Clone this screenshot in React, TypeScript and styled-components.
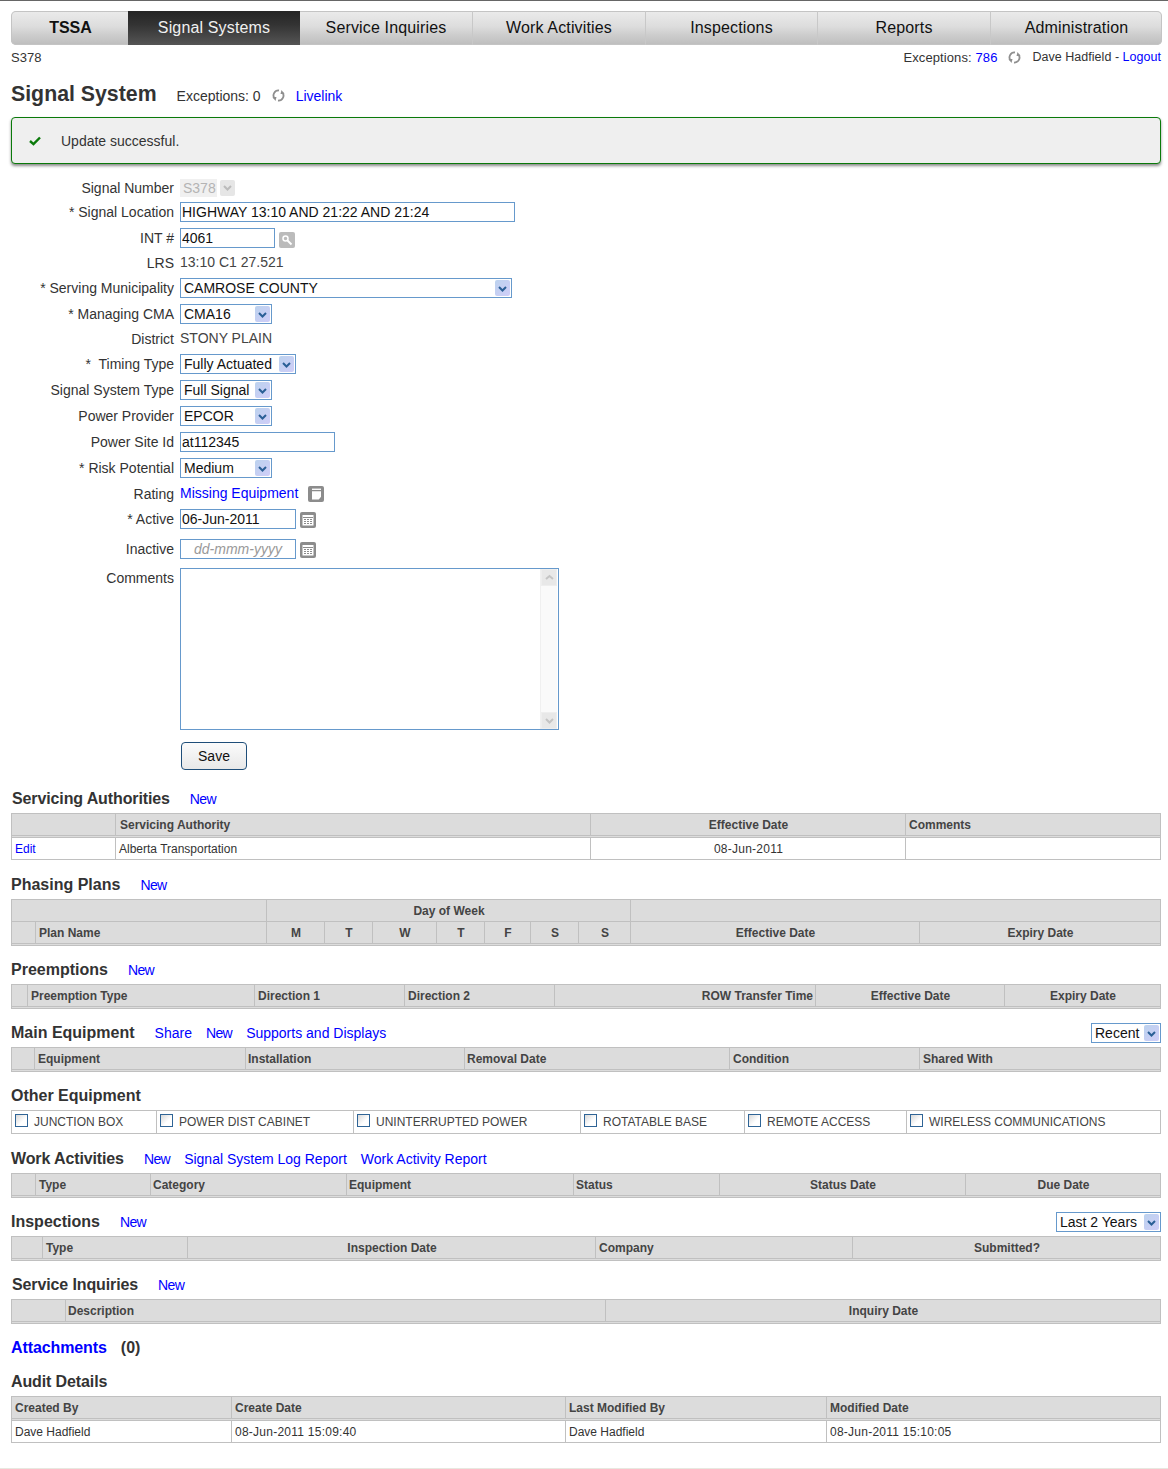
import React, { FC, PropsWithChildren } from 'react';
import styled, { createGlobalStyle } from 'styled-components';

const GlobalStyle = createGlobalStyle`
  html, body { margin: 0; padding: 0; background: #ffffff; }
  body { font-family: "Liberation Sans", Arial, sans-serif; font-size: 14px; color: #333333; }
  a { color: #0000ff; text-decoration: none; }
`;

const Page = styled('div')`
  box-sizing: border-box;
  width: 1168px;
  height: 1469px;
  padding: 11px 6px 0 11px;
  border-top: 1px solid #666666;
  border-bottom: 1px solid #e8e8e0;
  overflow: hidden;
`;

/* ---- nav ---- */
const NavBar = styled('nav')`
  display: flex;
  width: 1151px;
  height: 34px;
  margin-top: -1px;
  border-radius: 5px;
  overflow: hidden;
  box-shadow: inset 0 0 0 1px #c4c4c4;
  background: linear-gradient(#ebebeb 0, #dddddd 45%, #cccccc 72%, #bdbdbd 100%);
`;

const NavItem = styled('a')<{ $w: number; $active?: boolean; $brand?: boolean }>`
  box-sizing: border-box;
  display: flex;
  align-items: center;
  justify-content: center;
  width: ${(p) => p.$w}px;
  height: 34px;
  padding: 0 0 1px ${(p) => (p.$brand ? 2 : 0)}px;
  font-size: 16px;
  letter-spacing: ${(p) => (p.$brand ? 0 : 0.15)}px;
  font-weight: ${(p) => (p.$brand ? 700 : 400)};
  color: ${(p) => (p.$active ? '#f0f0f0' : '#111111')};
  background: ${(p) => (p.$active ? 'linear-gradient(#252525 0, #333333 40%, #555555 100%)' : 'transparent')};
  border-right: ${(p) => (p.$brand || p.$active ? '0' : '1px solid #c8c8c8')};
  &:last-child { border-right: 0; }
`;

const TopInfo = styled('div')`
  display: flex;
  justify-content: space-between;
  align-items: center;
  height: 24px;
  font-size: 13px;
`;

const UserInfo = styled('div')`
  display: flex;
  align-items: center;
  gap: 11px;
  padding-right: 1px;
`;

const ExceptionCount = styled('span')`
  letter-spacing: 0.1px;
`;

const UserName = styled('span')`
  font-size: 12.5px;
  letter-spacing: 0.03px;
`;

const TitleRow = styled('div')`
  display: flex;
  align-items: center;
  height: 32px;
  margin-top: 9px;
`;

const Title = styled('h1')`
  margin: 0 20px 0 0;
  font-size: 21.3px;
  font-weight: 700;
  color: #333333;
`;

const TitleMeta = styled('div')`
  display: flex;
  align-items: center;
  gap: 11px;
  padding-top: 3px;
`;

const Alert = styled('div')`
  box-sizing: border-box;
  display: flex;
  align-items: center;
  gap: 20px;
  width: 1150px;
  height: 47px;
  margin-top: 7px;
  padding-left: 17px;
  background: #efefef;
  border: 1px solid #0a7a0a;
  border-radius: 4px;
  box-shadow: 0 2px 3px rgba(0, 0, 0, 0.45);
`;

/* ---- form ---- */
const Form = styled('form')`
  margin: 12px 0 0 0;
`;

const FormRow = styled('div')<{ $h: number; $top?: boolean }>`
  display: flex;
  align-items: ${(p) => (p.$top ? 'flex-start' : 'center')};
  height: ${(p) => p.$h}px;
  margin-top: ${(p) => (p.$top ? 2 : 0)}px;
`;

const Label = styled('label')<{ $top?: boolean }>`
  width: 163px;
  margin-right: 6px;
  padding-top: ${(p) => (p.$top ? 2 : 0)}px;
  text-align: right;
  white-space: nowrap;
  color: #333333;
`;

const Value = styled('span')`
  color: #444444;
  margin-top: -2px;
`;

const RatingLink = styled('a')`
  margin-top: -2px;
`;

const TextInput = styled('input')<{ $w: number; $hint?: boolean }>`
  box-sizing: border-box;
  width: ${(p) => p.$w}px;
  height: 20px;
  padding: 0 1px;
  border: 1px solid #6699cc;
  font-family: inherit;
  font-size: 14px;
  color: #111111;
  outline: 0;
  text-align: ${(p) => (p.$hint ? 'center' : 'left')};
  &::placeholder { color: #999999; font-style: italic; opacity: 1; }
`;

const SelectShell = styled('span')<{ $w: number; $disabled?: boolean }>`
  box-sizing: border-box;
  display: inline-flex;
  align-items: center;
  gap: ${(p) => (p.$disabled ? 3 : 0)}px;
  width: ${(p) => p.$w}px;
  height: 20px;
  padding-right: 1px;
  border: ${(p) => (p.$disabled ? '0' : '1px solid #6699cc')};
  background: ${(p) => (p.$disabled ? 'transparent' : '#ffffff')};
`;

const SelectField = styled('select')<{ $disabled?: boolean }>`
  flex: 1;
  min-width: 0;
  height: 18px;
  padding: 0 0 0 3px;
  border: 0;
  background: ${(p) => (p.$disabled ? '#f0f0f0' : 'transparent')};
  appearance: none;
  font-family: inherit;
  font-size: 14px;
  color: ${(p) => (p.$disabled ? '#b4b4b4' : '#111111')};
  outline: 0;
  opacity: 1;
`;

const ArrowButton = styled('span')<{ $disabled?: boolean }>`
  display: flex;
  align-items: center;
  justify-content: center;
  flex: none;
  width: 15px;
  height: 16px;
  border-radius: 2px;
  background: ${(p) => (p.$disabled ? '#e6e6e6' : 'linear-gradient(135deg, #bcd2ee, #cfcdf8)')};
`;

const IconSquare = styled('span')<{ $gap: number; $drop?: number; $light?: boolean }>`
  display: inline-flex;
  align-items: center;
  justify-content: center;
  width: 16px;
  height: 16px;
  margin-left: ${(p) => p.$gap}px;
  margin-top: ${(p) => (p.$drop ?? 0) * 2}px;
  border-radius: 2px;
  background: ${(p) => (p.$light ? '#bbbbbb' : '#8c8c8c')};
`;

const CommentsBox = styled('div')`
  box-sizing: border-box;
  display: flex;
  width: 379px;
  height: 162px;
  border: 1px solid #6699cc;
`;

const CommentsText = styled('textarea')`
  flex: 1;
  border: 0;
  padding: 2px;
  resize: none;
  outline: 0;
`;

const ScrollTrack = styled('div')`
  display: flex;
  flex-direction: column;
  justify-content: space-between;
  width: 16px;
  margin-right: 1px;
  background: #fafafa;
  border-left: 1px solid #f0f0f0;
`;

const ScrollButton = styled('span')`
  display: flex;
  align-items: center;
  justify-content: center;
  height: 15px;
  background: #e8e8e8;
  border: 1px solid #eeeeee;
`;

const SaveRow = styled('div')`
  margin: 12px 0 0 170px;
  height: 28px;
`;

const SaveButton = styled('button')`
  box-sizing: border-box;
  width: 66px;
  height: 28px;
  border: 1px solid #1f4e79;
  border-radius: 4px;
  background: linear-gradient(#fbfbfb, #e8e8e8);
  font-family: inherit;
  font-size: 14px;
  color: #111111;
`;

/* ---- sections ---- */
const SectionHead = styled('div')<{ $top: number; $inset?: boolean }>`
  display: flex;
  align-items: center;
  height: 28px;
  margin-top: ${(p) => p.$top}px;
  padding-left: ${(p) => (p.$inset ? 1 : 0)}px;
  width: 1150px;
`;

const SectionTitle = styled('h2')<{ $tight?: boolean }>`
  margin: 0 20px 0 0;
  font-size: 16px;
  font-weight: 700;
  letter-spacing: ${(p) => (p.$tight ? -0.12 : 0)}px;
  color: #333333;
`;

const SectionLinks = styled('div')`
  display: flex;
  gap: 14px;
`;

const NewLink = styled('a')`
  letter-spacing: -0.6px;
`;

const RightSelect = styled('div')`
  margin-left: auto;
  display: flex;
`;

const AttachLink = styled('a')`
  font-size: 16px;
  font-weight: 700;
  letter-spacing: -0.1px;
`;

const AttachCount = styled('span')`
  margin-left: 14px;
  font-size: 16px;
  font-weight: 700;
`;

const Table = styled('div')`
  box-sizing: border-box;
  width: 1150px;
  border: 1px solid #c0c0c0;
  border-bottom: 0;
  font-size: 12px;
`;

const Row = styled('div')<{ $cols: string; $variant: 'head' | 'plain' | 'last'; $h?: number }>`
  display: grid;
  grid-template-columns: ${(p) => p.$cols};
  height: ${(p) => p.$h ?? 21}px;
  background: ${(p) => (p.$variant === 'plain' ? '#ffffff' : '#dcdcdc')};
  border-bottom: ${(p) => (p.$variant === 'head' ? '3px double #c0c0c0' : '1px solid #c0c0c0')};
`;

const Cell = styled('div')<{ $align?: string; $head?: boolean; $pad?: number; $date?: boolean }>`
  box-sizing: border-box;
  display: flex;
  align-items: center;
  justify-content: ${(p) => p.$align ?? 'flex-start'};
  padding: 0 2px 0 ${(p) => p.$pad ?? 3}px;
  font-weight: ${(p) => (p.$head ? 700 : 400)};
  letter-spacing: ${(p) => (p.$date ? 0.25 : 0)}px;
  color: ${(p) => (p.$head ? '#444444' : '#333333')};
  border-left: 1px solid #c0c0c0;
  white-space: nowrap;
  &:first-child { border-left: 0; }
`;

const CheckBox = styled('input')`
  appearance: none;
  flex: none;
  box-sizing: border-box;
  width: 13px;
  height: 13px;
  margin: -3px 6px 0 0;
  border: 1px solid #2f6496;
  background: linear-gradient(135deg, #d8d8d8, #ffffff 60%);
`;

const CheckText = styled('span')`
  color: #444444;
`;

const Chevron: FC<{ color?: string; up?: boolean }> = ({ color = '#2a5f96', up }) => (
  <svg width="9" height="7" viewBox="0 0 9 7">
    <path d={up ? 'M1 5 L4.5 2 L8 5' : 'M1 2 L4.5 5.5 L8 2'} fill="none" stroke={color} strokeWidth="2" />
  </svg>
);

const RefreshIcon: FC = () => (
  <svg width="13" height="13" viewBox="0 0 13 13">
    <path d="M7 1.5 A5 5 0 0 0 2.7 9.7" fill="none" stroke="#8f8f8f" strokeWidth="1.8" />
    <path d="M6 11.5 A5 5 0 0 0 10.3 3.3" fill="none" stroke="#8f8f8f" strokeWidth="1.8" />
    <path d="M0.5 8 L4.5 8 L3.5 12 Z M12.5 5 L8.5 5 L9.5 1 Z" fill="#8f8f8f" />
  </svg>
);

const CheckIcon: FC = () => (
  <svg width="12" height="10" viewBox="0 0 12 10">
    <path d="M1 5 L4.5 8.2 L11 1.5" fill="none" stroke="#0a7a0a" strokeWidth="2.4" />
  </svg>
);

const SearchIcon: FC = () => (
  <svg width="12" height="12" viewBox="0 0 12 12">
    <circle cx="4.5" cy="4.5" r="2.5" fill="none" stroke="#ffffff" strokeWidth="1.5" />
    <path d="M6.5 6.5 L10.5 10.5" stroke="#ffffff" strokeWidth="2" />
  </svg>
);

const RatingIcon: FC = () => (
  <svg width="9" height="12" viewBox="0 0 10 12">
    <path d="M0 0 H10 V1.5 H0 Z" fill="#ffffff" />
    <path d="M0 3 H10 V9 L7.5 12 H0 Z" fill="#ffffff" />
  </svg>
);

const CalendarIcon: FC = () => (
  <svg width="12" height="12" viewBox="0 0 12 12">
    <rect x="0.5" y="1" width="11" height="10.5" fill="#ffffff" />
    <path d="M1 3.5 H11" stroke="#8c8c8c" />
    <path d="M2 5.5 H4 M5 5.5 H7 M8 5.5 H10 M2 7.5 H4 M5 7.5 H7 M8 7.5 H10 M2 9.5 H4 M5 9.5 H7 M8 9.5 H10" stroke="#8c8c8c" />
  </svg>
);

// column widths from the x of each vertical rule
const tracks = (edges: number[]): string => {
  const all = [12, ...edges, 1160];

  return all.slice(1).map((x, i) => `${x - all[i]}px`).join(' ');
};

type ColumnDef = { text?: string; align?: string; pad?: number };

const HeadRow: FC<{ edges: number[]; columns: ColumnDef[]; last?: boolean }> = ({ edges, columns, last }) => (
  <Row $cols={tracks(edges)} $variant={last ? 'last' : 'head'}>
    {columns.map((col, i) => (
      <Cell key={`head-${i}`} $head $align={col.align} $pad={col.pad}>{col.text}</Cell>
    ))}
  </Row>
);

const Select: FC<{ w: number; value: string; disabled?: boolean }> = ({ w, value, disabled }) => (
  <SelectShell $w={w} $disabled={disabled}>
    <SelectField $disabled={disabled} disabled={disabled} defaultValue={value}>
      <option>{value}</option>
    </SelectField>
    <ArrowButton $disabled={disabled}>
      <Chevron color={disabled ? '#bbbbbb' : '#2a5f96'} />
    </ArrowButton>
  </SelectShell>
);

const Field: FC<PropsWithChildren<{ h: number; label: string; top?: boolean }>> = ({ h, label, top, children }) => (
  <FormRow $h={h} $top={top}>
    <Label $top={top}>{label}</Label>
    {children}
  </FormRow>
);

const center = 'center';

const otherEquipment = [
  'JUNCTION BOX',
  'POWER DIST CABINET',
  'UNINTERRUPTED POWER',
  'ROTATABLE BASE',
  'REMOTE ACCESS',
  'WIRELESS COMMUNICATIONS',
];

const App: FC = () => {
  return (
    <Page>
      <GlobalStyle />
      <NavBar>
        <NavItem $w={117} $brand>TSSA</NavItem>
        <NavItem $w={172} $active>Signal Systems</NavItem>
        <NavItem $w={173}>Service Inquiries</NavItem>
        <NavItem $w={173}>Work Activities</NavItem>
        <NavItem $w={172}>Inspections</NavItem>
        <NavItem $w={173}>Reports</NavItem>
        <NavItem $w={171}>Administration</NavItem>
      </NavBar>
      <TopInfo>
        <span>S378</span>
        <UserInfo>
          <ExceptionCount>Exceptions: <a href="#x">786</a></ExceptionCount>
          <RefreshIcon />
          <UserName>Dave Hadfield - <a href="#l">Logout</a></UserName>
        </UserInfo>
      </TopInfo>

      <TitleRow>
        <Title>Signal System</Title>
        <TitleMeta>
          <span>Exceptions: 0</span>
          <RefreshIcon />
          <a href="#l">Livelink</a>
        </TitleMeta>
      </TitleRow>

      <Alert>
        <CheckIcon />
        <span>Update successful.</span>
      </Alert>

      <Form>
        <Field h={23} label="Signal Number"><Select w={56} value="S378" disabled /></Field>
        <Field h={26} label="* Signal Location"><TextInput $w={335} defaultValue="HIGHWAY 13:10 AND 21:22 AND 21:24" /></Field>
        <Field h={26} label="INT #">
          <TextInput $w={95} defaultValue="4061" />
          <IconSquare $gap={4} $drop={2} $light><SearchIcon /></IconSquare>
        </Field>
        <Field h={24} label="LRS"><Value>13:10 C1 27.521</Value></Field>
        <Field h={26} label="* Serving Municipality"><Select w={332} value="CAMROSE COUNTY" /></Field>
        <Field h={26} label="* Managing CMA"><Select w={92} value="CMA16" /></Field>
        <Field h={24} label="District"><Value>STONY PLAIN</Value></Field>
        <Field h={26} label={'*\u00a0 Timing Type'}><Select w={116} value="Fully Actuated" /></Field>
        <Field h={26} label="Signal System Type"><Select w={92} value="Full Signal" /></Field>
        <Field h={26} label="Power Provider"><Select w={92} value="EPCOR" /></Field>
        <Field h={26} label="Power Site Id"><TextInput $w={155} defaultValue="at112345" /></Field>
        <Field h={26} label="* Risk Potential"><Select w={92} value="Medium" /></Field>
        <Field h={25} label="Rating">
          <RatingLink href="#m">Missing Equipment</RatingLink>
          <IconSquare $gap={10}><RatingIcon /></IconSquare>
        </Field>
        <Field h={26} label="* Active">
          <TextInput $w={116} defaultValue="06-Jun-2011" />
          <IconSquare $gap={4} $drop={1}><CalendarIcon /></IconSquare>
        </Field>
        <Field h={34} label="Inactive">
          <TextInput $w={116} $hint placeholder="dd-mmm-yyyy" />
          <IconSquare $gap={4} $drop={1}><CalendarIcon /></IconSquare>
        </Field>
        <Field h={162} label="Comments" top>
          <CommentsBox>
            <CommentsText />
            <ScrollTrack>
              <ScrollButton><Chevron color="#c4c4c4" up /></ScrollButton>
              <ScrollButton><Chevron color="#c4c4c4" /></ScrollButton>
            </ScrollTrack>
          </CommentsBox>
        </Field>
        <SaveRow>
          <SaveButton type="button">Save</SaveButton>
        </SaveRow>
      </Form>

      <SectionHead $top={15} $inset>
        <SectionTitle $tight>Servicing Authorities</SectionTitle>
        <SectionLinks><NewLink href="#n">New</NewLink></SectionLinks>
      </SectionHead>
      <Table>
        <HeadRow
          edges={[115, 590, 905]}
          columns={[{}, { text: 'Servicing Authority', pad: 4 }, { text: 'Effective Date', align: center }, { text: 'Comments', pad: 3 }]}
        />
        <Row $cols={tracks([115, 590, 905])} $variant="plain">
          <Cell><a href="#e">Edit</a></Cell>
          <Cell>Alberta Transportation</Cell>
          <Cell $align={center} $date>08-Jun-2011</Cell>
          <Cell />
        </Row>
      </Table>

      <SectionHead $top={11}>
        <SectionTitle>Phasing Plans</SectionTitle>
        <SectionLinks><NewLink href="#n">New</NewLink></SectionLinks>
      </SectionHead>
      <Table>
        <HeadRow
          last
          edges={[266, 630]}
          columns={[{}, { text: 'Day of Week', align: center }, {}]}
        />
        <HeadRow
          edges={[35, 266, 324, 372, 436, 484, 530, 578, 630, 919]}
          columns={[
            {},
            { text: 'Plan Name' },
            { text: 'M', align: center },
            { text: 'T', align: center },
            { text: 'W', align: center },
            { text: 'T', align: center },
            { text: 'F', align: center },
            { text: 'S', align: center },
            { text: 'S', align: center },
            { text: 'Effective Date', align: center },
            { text: 'Expiry Date', align: center },
          ]}
        />
      </Table>

      <SectionHead $top={10}>
        <SectionTitle>Preemptions</SectionTitle>
        <SectionLinks><NewLink href="#n">New</NewLink></SectionLinks>
      </SectionHead>
      <Table>
        <HeadRow
          edges={[27, 254, 404, 554, 815, 1004]}
          columns={[
            {},
            { text: 'Preemption Type' },
            { text: 'Direction 1' },
            { text: 'Direction 2' },
            { text: 'ROW Transfer Time', align: 'flex-end' },
            { text: 'Effective Date', align: center },
            { text: 'Expiry Date', align: center },
          ]}
        />
      </Table>

      <SectionHead $top={10}>
        <SectionTitle>Main Equipment</SectionTitle>
        <SectionLinks>
          <a href="#s">Share</a>
          <NewLink href="#n">New</NewLink>
          <a href="#d">Supports and Displays</a>
        </SectionLinks>
        <RightSelect><Select w={70} value="Recent" /></RightSelect>
      </SectionHead>
      <Table>
        <HeadRow
          edges={[34, 245, 464, 729, 919]}
          columns={[
            {},
            { text: 'Equipment' },
            { text: 'Installation', pad: 2 },
            { text: 'Removal Date', pad: 2 },
            { text: 'Condition' },
            { text: 'Shared With' },
          ]}
        />
      </Table>

      <SectionHead $top={10}>
        <SectionTitle>Other Equipment</SectionTitle>
      </SectionHead>
      <Table>
        <Row $cols={tracks([156, 353, 580, 744, 906])} $variant="plain" $h={22}>
          {otherEquipment.map((name) => (
            <Cell key={name}>
              <CheckBox type="checkbox" />
              <CheckText>{name}</CheckText>
            </Cell>
          ))}
        </Row>
      </Table>

      <SectionHead $top={11}>
        <SectionTitle $tight>Work Activities</SectionTitle>
        <SectionLinks>
          <NewLink href="#n">New</NewLink>
          <a href="#l">Signal System Log Report</a>
          <a href="#r">Work Activity Report</a>
        </SectionLinks>
      </SectionHead>
      <Table>
        <HeadRow
          edges={[35, 150, 346, 573, 719, 965]}
          columns={[
            {},
            { text: 'Type' },
            { text: 'Category', pad: 2 },
            { text: 'Equipment', pad: 2 },
            { text: 'Status', pad: 2 },
            { text: 'Status Date', align: center },
            { text: 'Due Date', align: center },
          ]}
        />
      </Table>

      <SectionHead $top={10}>
        <SectionTitle>Inspections</SectionTitle>
        <SectionLinks><NewLink href="#n">New</NewLink></SectionLinks>
        <RightSelect><Select w={105} value="Last 2 Years" /></RightSelect>
      </SectionHead>
      <Table>
        <HeadRow
          edges={[42, 187, 595, 852]}
          columns={[
            {},
            { text: 'Type' },
            { text: 'Inspection Date', align: center },
            { text: 'Company' },
            { text: 'Submitted?', align: center },
          ]}
        />
      </Table>

      <SectionHead $top={10} $inset>
        <SectionTitle $tight>Service Inquiries</SectionTitle>
        <SectionLinks><NewLink href="#n">New</NewLink></SectionLinks>
      </SectionHead>
      <Table>
        <HeadRow
          edges={[65, 605]}
          columns={[{}, { text: 'Description', pad: 2 }, { text: 'Inquiry Date', align: center }]}
        />
      </Table>

      <SectionHead $top={10}>
        <AttachLink href="#a">Attachments</AttachLink>
        <AttachCount>(0)</AttachCount>
      </SectionHead>

      <SectionHead $top={6}>
        <SectionTitle $tight>Audit Details</SectionTitle>
      </SectionHead>
      <Table>
        <HeadRow
          edges={[231, 565, 826]}
          columns={[{ text: 'Created By' }, { text: 'Create Date' }, { text: 'Last Modified By' }, { text: 'Modified Date' }]}
        />
        <Row $cols={tracks([231, 565, 826])} $variant="plain">
          <Cell>Dave Hadfield</Cell>
          <Cell $date>08-Jun-2011 15:09:40</Cell>
          <Cell>Dave Hadfield</Cell>
          <Cell $date>08-Jun-2011 15:10:05</Cell>
        </Row>
      </Table>
    </Page>
  );
};

export default App;
